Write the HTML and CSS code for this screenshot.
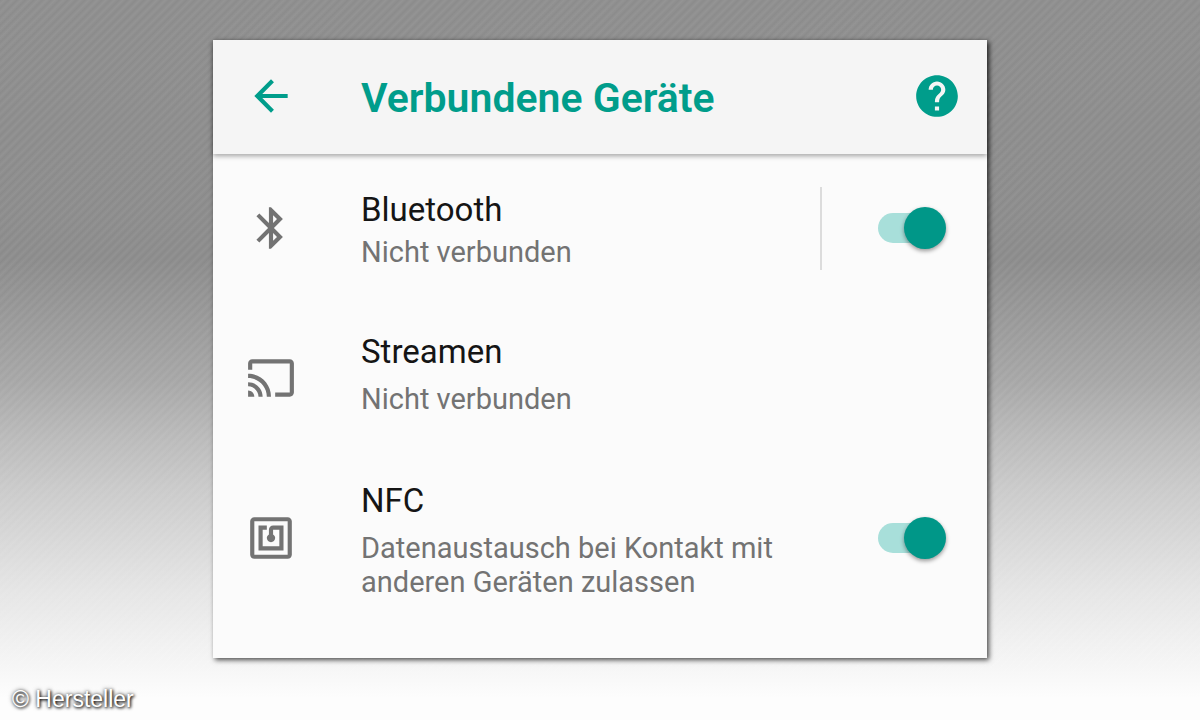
FILE: index.html
```html
<!DOCTYPE html>
<html lang="de">
<head>
  <meta charset="UTF-8" />
  <meta name="viewport" content="width=device-width, initial-scale=1" />
  <title>Verbundene Geräte</title>
  <link rel="stylesheet" href="styles.css">
</head>
<body>
  <main class="card">
    <header class="toolbar">
      <button class="icon-button" type="button" aria-label="Zurück">
        <svg class="icon" viewBox="0 0 24 24"><path d="M20 11H7.830l5.590-5.590L12 4l-8 8 8 8 1.410-1.410L7.830 13H20v-2z"/></svg>
      </button>
      <h1>Verbundene Geräte</h1>
      <button class="icon-button" type="button" aria-label="Hilfe">
        <svg class="icon" viewBox="0 0 24 24"><path d="M12 2C6.480 2 2 6.480 2 12s4.480 10 10 10 10-4.480 10-10S17.520 2 12 2zm1 17h-2v-2h2v2zm2.070-7.750l-.9.920C13.450 12.900 13 13.500 13 15h-2v-.5c0-1.100.450-2.100 1.170-2.830l1.240-1.260c.370-.360.590-.860.590-1.410 0-1.100-.9-2-2-2s-2 .9-2 2H8c0-2.210 1.790-4 4-4s4 1.790 4 4c0 .880-.360 1.680-.930 2.250z"/></svg>
      </button>
    </header>

    <!-- BLUETOOTH -->
    <div class="row row-switch row-divided">
      <svg class="icon" viewBox="0 0 24 24"><path d="M17.710 7.710L12 2h-1v7.590L6.410 5 5 6.410 10.590 12 5 17.590 6.410 19 11 14.410V22h1l5.710-5.710L13.410 12l4.300-4.290zM13 5.830l1.880 1.880L13 9.590V5.830zm1.880 10.460L13 18.170v-3.760l1.880 1.880z"/></svg>
      <label class="text" for="bluetooth">
        <span class="title">Bluetooth</span>
        <span class="summary">Nicht verbunden</span>
      </label>
      <div class="control">
        <input class="switch" type="checkbox" id="bluetooth" checked />
      </div>
    </div>

    <!-- STREAMEN -->
    <a class="row row-link" href="#streamen">
      <svg class="icon" viewBox="0 0 24 24"><path d="M21 3H3c-1.100 0-2 .9-2 2v3h2V5h18v14h-7v2h7c1.100 0 2-.9 2-2V5c0-1.100-.9-2-2-2zM1 18v3h3c0-1.660-1.340-3-3-3zm0-4v2c2.760 0 5 2.240 5 5h2c0-3.870-3.130-7-7-7zm0-4v2c4.970 0 9 4.030 9 9h2c0-6.080-4.930-11-11-11z"/></svg>
      <span class="text">
        <span class="title">Streamen</span>
        <span class="summary">Nicht verbunden</span>
      </span>
    </a>

    <!-- NFC -->
    <div class="row row-switch row-tall">
      <svg class="icon" viewBox="0 0 24 24"><path d="M20 2H4c-1.100 0-2 .9-2 2v16c0 1.100.9 2 2 2h16c1.100 0 2-.9 2-2V4c0-1.100-.9-2-2-2zm0 18H4V4h16v16zM18 6h-5c-1.100 0-2 .9-2 2v2.280c-.6.350-1 .980-1 1.720 0 1.100.9 2 2 2s2-.9 2-2c0-.740-.4-1.380-1-1.720V8h3v8H8V8h2V6H6v12h12V6z"/></svg>
      <label class="text" for="nfc">
        <span class="title">NFC</span>
        <span class="summary">Datenaustausch bei Kontakt mit anderen Geräten zulassen</span>
      </label>
      <div class="control">
        <input class="switch" type="checkbox" id="nfc" checked />
      </div>
    </div>
  </main>

  <footer class="credit">© Hersteller</footer>
</body>
</html>
```
FILE: styles.css
```css
* {
  box-sizing: border-box;
}

body {
  margin: 0;
  min-height: 100vh;
  display: flex;
  flex-direction: column;
  padding: 40px 12px 7px;
  font-family: Roboto, sans-serif;
  background:
    repeating-linear-gradient(135deg, rgba(255, 255, 255, 0) 0px, rgba(255, 255, 255, 0.07) 3px, rgba(255, 255, 255, 0) 6px),
    linear-gradient(#8c8c8c 0%, #8a8a8a 36%, #a6a6a6 53%, #bababa 61%, #cacaca 68%, #e5e5e5 82%, #fdfdfd 97%);
}

.card {
  width: 100%;
  max-width: 774px;
  margin: 0 auto;
  padding-bottom: 36px;
  background-color: #fbfbfb;
  box-shadow: 2px 2px 5px rgba(0, 0, 0, 0.7);
}

.toolbar {
  display: flex;
  align-items: center;
  min-height: 114px;
  padding: 0 25px 2px 33px;
  background-color: #f5f5f5;
  box-shadow: 0 2px 5px rgba(0, 0, 0, 0.35);
  color: #009d8b;
}

h1 {
  flex: 1;
  margin: 0 0 0 65px;
  padding-top: 4px;
  font-size: 41px;
  line-height: 50px;
  font-weight: 600;
}

.icon-button {
  display: flex;
  padding: 0;
  border: none;
  background: none;
  color: inherit;
  cursor: pointer;
}

.icon {
  flex: none;
  width: 50px;
  height: 50px;
  fill: currentColor;
}

.row {
  display: flex;
  align-items: center;
  min-height: 148px;
  padding: 0 41px 0 33px;
  color: #737373;
  text-decoration: none;
}

.row-link {
  min-height: 152px;
}

.row-tall {
  min-height: 168px;
}

.text {
  flex: 1;
  display: flex;
  flex-direction: column;
  gap: 11px;
  margin-left: 65px;
}

.row-switch .text {
  padding-top: 4px;
}

.row-link .text {
  padding-bottom: 7px;
}

.row-divided .text {
  gap: 6px;
}

.title {
  font-size: 33px;
  line-height: 38px;
  color: #151515;
}

.summary {
  max-width: 430px;
  font-size: 29px;
  line-height: 34px;
}

.control {
  display: flex;
  align-items: center;
  height: 83px;
  padding-left: 56px;
}

.row-divided .control {
  border-left: 2px solid #dcdcdc;
}

.switch {
  appearance: none;
  display: flex;
  align-items: center;
  width: 68px;
  height: 42px;
  margin: 0;
  position: relative;
  cursor: pointer;
}

.switch::before {
  content: "";
  width: 64px;
  height: 30px;
  border-radius: 15px;
  background-color: #a8dfda;
}

.switch::after {
  content: "";
  position: absolute;
  left: 0;
  top: 0;
  width: 42px;
  height: 42px;
  border-radius: 50%;
  background-color: #fafafa;
  box-shadow: 0 2px 4px rgba(0, 0, 0, 0.4);
}

.switch:checked::after {
  left: auto;
  right: 0;
  background-color: #009788;
}

.credit {
  margin-top: auto;
  font-family: "Liberation Sans", Arial, sans-serif;
  font-size: 23px;
  line-height: 28px;
  color: #ffffff;
  text-shadow: 1px 1px 3px #000000, 0 0 4px rgba(0, 0, 0, 0.7);
}
```
